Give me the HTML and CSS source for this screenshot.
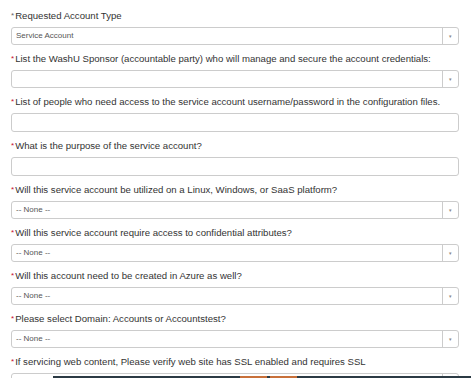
FILE: index.html
```html
<!DOCTYPE html>
<html lang="en">
<head>
    <meta charset="UTF-8">
    <title>Service Account Request</title>
    <link rel="stylesheet" href="styles.css">
</head>
<body>
    <!-- request form -->
    <form class="request-form">
        <div class="form-group">
            <label class="field-label"><span class="mark mark-done">*</span>Requested Account Type</label>
            <div class="select-box"><span class="select-text">Service Account</span><span class="select-arrow">&#9662;</span></div>
        </div>
        <div class="form-group">
            <label class="field-label"><span class="mark">*</span>List the WashU Sponsor (accountable party) who will manage and secure the account credentials:</label>
            <div class="select-box"><span class="select-text"></span><span class="select-arrow">&#9662;</span></div>
        </div>
        <div class="form-group">
            <label class="field-label"><span class="mark">*</span>List of people who need access to the service account username/password in the configuration files.</label>
            <div class="text-box"></div>
        </div>
        <div class="form-group">
            <label class="field-label"><span class="mark">*</span>What is the purpose of the service account?</label>
            <div class="text-box"></div>
        </div>
        <div class="form-group">
            <label class="field-label"><span class="mark">*</span>Will this service account be utilized on a Linux, Windows, or SaaS platform?</label>
            <div class="select-box"><span class="select-text">-- None --</span><span class="select-arrow">&#9662;</span></div>
        </div>
        <div class="form-group">
            <label class="field-label"><span class="mark">*</span>Will this service account require access to confidential attributes?</label>
            <div class="select-box"><span class="select-text">-- None --</span><span class="select-arrow">&#9662;</span></div>
        </div>
        <div class="form-group">
            <label class="field-label"><span class="mark">*</span>Will this account need to be created in Azure as well?</label>
            <div class="select-box"><span class="select-text">-- None --</span><span class="select-arrow">&#9662;</span></div>
        </div>
        <div class="form-group">
            <label class="field-label"><span class="mark">*</span>Please select Domain: Accounts or Accountstest?</label>
            <div class="select-box"><span class="select-text">-- None --</span><span class="select-arrow">&#9662;</span></div>
        </div>
        <div class="form-group">
            <label class="field-label"><span class="mark">*</span>If servicing web content, Please verify web site has SSL enabled and requires SSL</label>
            <div class="select-box"><span class="select-text"></span><span class="select-arrow"></span></div>
        </div>
    </form>

    <!-- taskbar edge at the bottom of the window -->
    <div class="taskbar"><span class="task-item"></span><span class="task-item"></span></div>
</body>
</html>
```

FILE: styles.css
```css
/* page */
body {
    margin: 0;
    padding: 10px 12px 0 11px;
    font-family: "Liberation Sans", Arial, sans-serif;
    background-color: #fff;
    color: #333;
    overflow: hidden;
    height: 378px;
    box-sizing: border-box;
}

/* one question */
.form-group {
    margin-bottom: 8px;
}

.field-label {
    display: block;
    font-size: 9.6px;
    line-height: 12px;
    height: 12px;
    margin-bottom: 5px;
    white-space: nowrap;
}

/* required marker */
.mark {
    color: #c8102e;
    font-size: 8px;
    margin-right: 1px;
    vertical-align: top;
}

.mark-done {
    color: #666;
}

/* select-like field */
.select-box {
    display: flex;
    height: 18px;
    border: 1px solid #ccc;
    border-radius: 3px;
    box-sizing: border-box;
    background-color: #fff;
}

.select-text {
    flex: 1;
    font-size: 8px;
    line-height: 16px;
    padding-left: 4px;
    color: #555;
}

.select-arrow {
    width: 15px;
    border-left: 1px solid #ccc;
    font-size: 5px;
    line-height: 16px;
    text-align: center;
    color: #888;
}

/* text input */
.text-box {
    height: 19px;
    border: 1px solid #ccc;
    border-radius: 3px;
    box-sizing: border-box;
}

/* dark strip along the bottom */
.taskbar {
    position: fixed;
    left: 53px;
    right: 0;
    bottom: 0;
    height: 2px;
    background-color: #2b3a44;
    display: flex;
    padding-left: 187px;
    gap: 3px;
}

.task-item {
    width: 27px;
    background-color: #c8703a;
}
```
